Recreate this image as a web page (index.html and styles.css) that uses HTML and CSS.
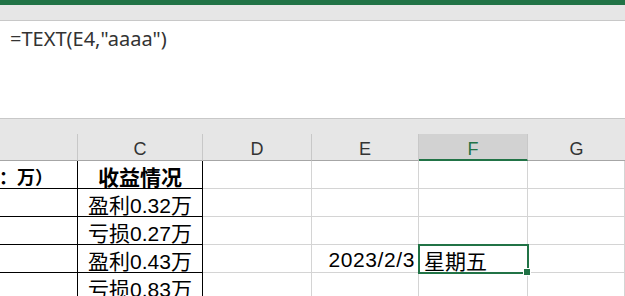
FILE: index.html
```html
<!DOCTYPE html>
<html lang="zh-CN">
<head>
    <meta charset="UTF-8">
    <title>TEXT</title>
    <link rel="stylesheet" href="styles.css">
</head>
<body>
    <div class="topbar"></div>
    <div class="strip"></div>

    <!-- 编辑栏 -->
    <div class="formula">=TEXT(E4,"aaaa")</div>
    <div class="gap"></div>

    <div class="sheet">
        <div class="hd"></div>
        <div class="hd">C</div>
        <div class="hd">D</div>
        <div class="hd">E</div>
        <div class="hd sel">F</div>
        <div class="hd last">G</div>

        <div class="cell dark clip"><span class="bold">（单位：万）</span></div>
        <div class="cell dark center bold">收益情况</div>
        <div class="cell"></div>
        <div class="cell"></div>
        <div class="cell"></div>
        <div class="cell"></div>

        <div class="cell dark"></div>
        <div class="cell dark center">盈利0.32万</div>
        <div class="cell"></div>
        <div class="cell"></div>
        <div class="cell"></div>
        <div class="cell"></div>

        <div class="cell dark"></div>
        <div class="cell dark center">亏损0.27万</div>
        <div class="cell"></div>
        <div class="cell"></div>
        <div class="cell"></div>
        <div class="cell"></div>

        <div class="cell dark"></div>
        <div class="cell dark center">盈利0.43万</div>
        <div class="cell"></div>
        <div class="cell right date">2023/2/3</div>
        <div class="cell active">星期五<span class="handle"></span></div>
        <div class="cell"></div>

        <div class="cell dark"></div>
        <div class="cell dark center">亏损0.83万</div>
        <div class="cell"></div>
        <div class="cell"></div>
        <div class="cell"></div>
        <div class="cell"></div>
    </div>
</body>
</html>
```

FILE: styles.css
```css
body {
    margin: 0;
    width: 625px;
    height: 296px;
    overflow: hidden;
    background: #fff;
    font-family: "Noto Sans", "Noto Sans CJK SC", sans-serif;
}
.topbar {
    height: 5px;
    background-color: #217346;
}
.strip {
    height: 15px;
    background-color: #e6e6e6;
    border-bottom: 1px solid #c8c8c8;
}
.formula {
    height: 97px;
    padding-left: 10px;
    font-size: 20px;
    line-height: 36px;
    color: #333;
    border-bottom: 1px solid #c8c8c8;
}
.gap {
    height: 15px;
    background-color: #e6e6e6;
}
.sheet {
    display: grid;
    grid-template-columns: 78px 125px 109px 107px 109px 1fr;
    grid-template-rows: 27px repeat(5, 28px);
    font-family: "Liberation Sans", "Noto Sans CJK SC", sans-serif;
    font-size: 21px;
    color: #000;
}
.hd {
    background-color: #e6e6e6;
    border-right: 1px solid #c8c8c8;
    border-bottom: 1px solid #a6a6a6;
    display: flex;
    align-items: center;
    justify-content: center;
    padding-top: 5px;
    color: #333;
    font-size: 18px;
}
.hd.sel {
    background-color: #d2d2d2;
    color: #217346;
    border-bottom: 2px solid #217346;
}
.hd.last {
    border-right: none;
}
.cell {
    border-right: 1px solid #d4d4d4;
    border-bottom: 1px solid #d4d4d4;
    display: flex;
    align-items: center;
    padding: 2px 3px 0;
    white-space: nowrap;
    overflow: hidden;
}
.cell.dark {
    border-right-color: #000;
    border-bottom-color: #000;
}
.center {
    justify-content: center;
}
.right {
    justify-content: flex-end;
}
.date {
    letter-spacing: 0.6px;
}
.bold {
    font-weight: bold;
}
.clip {
    justify-content: flex-end;
    padding-right: 24px;
    font-size: 18px;
}
.active {
    position: relative;
    outline: 2px solid #217346;
    outline-offset: -1px;
    padding-left: 5px;
    overflow: visible;
}
.handle {
    position: absolute;
    right: -4px;
    bottom: -4px;
    width: 6px;
    height: 6px;
    background-color: #217346;
    border: 1px solid #fff;
}
```
